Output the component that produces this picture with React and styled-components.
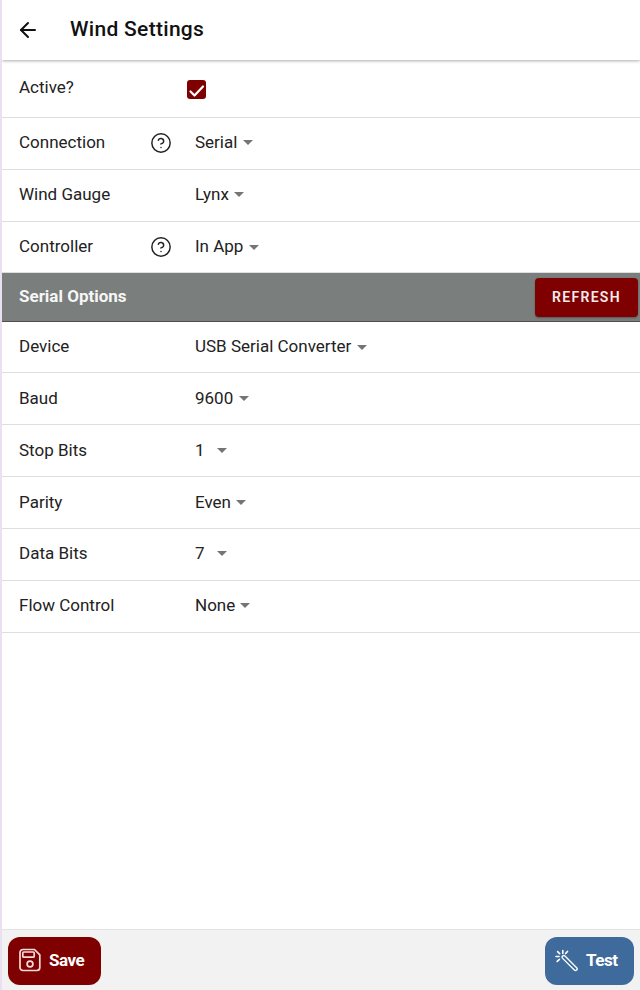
import React from 'react'
import styled, { createGlobalStyle } from 'styled-components'
import { ArrowLeft, CircleHelp } from 'lucide-react'

const GlobalStyle = createGlobalStyle`
  html, body { margin: 0; padding: 0; }
  body { font-family: Roboto, "Liberation Sans", sans-serif; background: #fff; }
  * { box-sizing: border-box; }
`

const Page = styled.div`
  display: flex;
  flex-direction: column;
  height: 990px;
  width: 640px;
  overflow: hidden;
  border-left: 2px solid #eae0f2;
  background: #fff;
`

const Header = styled.header`
  display: flex;
  align-items: center;
  flex: 0 0 60px;
  padding-left: 14px;
  gap: 30px;
  box-shadow: 0 1px 3px rgba(0, 0, 0, 0.32);
  position: relative;
  z-index: 1;
  color: #111;
`

const Title = styled.h1`
  margin: 0 0 2px;
  font-size: 21px;
  font-weight: 500;
  letter-spacing: 0.3px;
`

const Content = styled.main`
  flex: 1;
  padding-top: 1px;
`

const Row = styled.div`
  display: flex;
  align-items: center;
  height: ${({ $height }) => $height || 52}px;
  padding: 0 0 ${({ $lift }) => $lift || 0}px 17px;
  border-bottom: 1px solid #dedede;
  font-size: 17px;
  color: #222;
`

const Label = styled.div`
  width: 130px;
  position: relative;
  top: -1px;
`

const HelpSlot = styled.div`
  width: 46px;
  padding-left: 1px;
  display: flex;
  color: #222;
`

const Select = styled.div`
  display: flex;
  align-items: center;
  position: relative;
  top: -1px;
`

const Caret = styled.span`
  width: 0;
  height: 0;
  margin-left: ${({ $gap }) => $gap || 6}px;
  margin-top: 2px;
  border-left: 5px solid transparent;
  border-right: 5px solid transparent;
  border-top: 5px solid #757575;
`

const CheckBox = styled.div`
  display: flex;
  width: 19px;
  height: 19px;
  margin: 2px 0 0 38px;
  border-radius: 3px;
  background: #7f0000;
`

const Section = styled.div`
  display: flex;
  align-items: center;
  justify-content: space-between;
  height: 49px;
  padding: 0 2px 0 17px;
  background: #7a7e7c;
  border-bottom: 1px solid #4d504f;
  color: #f6f6f6;
  font-size: 17px;
  font-weight: 700;
`

const SectionTitle = styled.span`
  position: relative;
  top: -1px;
`

const RefreshButton = styled.button`
  width: 103px;
  height: 39px;
  border: 0;
  border-radius: 4px;
  background: #7f0000;
  color: #f4ecec;
  font-family: inherit;
  font-size: 14px;
  font-weight: 600;
  letter-spacing: 1.3px;
  box-shadow: 0 1px 2px rgba(0, 0, 0, 0.3);
`

const Footer = styled.footer`
  display: flex;
  justify-content: space-between;
  flex: 0 0 60px;
  padding: 7px 6px 5px 6px;
  background: #f2f2f3;
  border-top: 1px solid #e4e4e4;
`

const ActionButton = styled.button`
  display: flex;
  align-items: center;
  gap: ${({ $gap }) => $gap}px;
  height: 48px;
  width: ${({ $width }) => $width}px;
  padding: 0 0 2px ${({ $pad }) => $pad}px;
  border: 0;
  border-radius: 12px;
  background: ${({ $color }) => $color};
  color: #fff;
  font-family: inherit;
  font-size: 17px;
  font-weight: 700;
  letter-spacing: -0.5px;
`

const CheckMark = () => (
  <svg width="19" height="19" viewBox="0 0 19 19" fill="none" stroke="#fff" strokeWidth="2.2" strokeLinecap="round" strokeLinejoin="round">
    <path d="M3.5 11.5 L7.5 15.5 L16 6.5" />
  </svg>
)

const SaveIcon = () => (
  <svg width="22" height="24" viewBox="0 0 22 24" fill="none" stroke="#f6dcdc" strokeWidth="1.7" strokeLinejoin="round">
    <path d="M4 1.5 H15.5 L20.8 6.8 V19.5 A3 3 0 0 1 17.8 22.5 H4 A3 3 0 0 1 1 19.5 V4.5 A3 3 0 0 1 4 1.5 Z" />
    <rect x="3.8" y="4" width="11.4" height="5.2" rx="1" />
    <circle cx="11" cy="16" r="2.9" />
  </svg>
)

const WandIcon = () => (
  <svg width="24" height="24" viewBox="0 0 24 24" fill="none" stroke="#fff" strokeLinecap="round">
    <path d="M9.8 9.2 L21.5 20.9" strokeWidth="4.6" />
    <path d="M9.8 9.2 L21.5 20.9" strokeWidth="2" stroke="#3f6b9c" />
    <path d="M8.8 2.5 V5.5 M2 8.5 H5 M3.6 3.6 L5.6 5.6 M13.5 3.4 L11.6 5.6 M3.2 13.4 L5.4 11.4" strokeWidth="1.6" />
  </svg>
)

const connectionRows = [
  { label: 'Connection', value: 'Serial', help: true, lift: 2 },
  { label: 'Wind Gauge', value: 'Lynx', lift: 2, gap: 5 },
  { label: 'Controller', value: 'In App', help: true, height: 51 },
]

const serialRows = [
  { label: 'Device', value: 'USB Serial Converter', height: 51 },
  { label: 'Baud', value: '9600' },
  { label: 'Stop Bits', value: '1', gap: 12 },
  { label: 'Parity', value: 'Even', gap: 5 },
  { label: 'Data Bits', value: '7', gap: 12, lift: 2 },
  { label: 'Flow Control', value: 'None', gap: 5, lift: 2 },
]

const SettingRow = ({ label, value, help, gap, height, lift }) => (
  <Row $height={height} $lift={lift}>
    <Label>{label}</Label>
    <HelpSlot>{help && <CircleHelp size={22} strokeWidth={1.6} />}</HelpSlot>
    <Select>
      {value}
      <Caret $gap={gap} />
    </Select>
  </Row>
)

const App = () => (
  <Page>
    <GlobalStyle />
    <Header>
      <ArrowLeft size={24} strokeWidth={2} />
      <Title>Wind Settings</Title>
    </Header>
    <Content>
      <Row $height={57} $lift={2}>
        <Label>Active?</Label>
        <CheckBox><CheckMark /></CheckBox>
      </Row>
      {connectionRows.map((row) => <SettingRow key={row.label} {...row} />)}
      <Section>
        <SectionTitle>Serial Options</SectionTitle>
        <RefreshButton>REFRESH</RefreshButton>
      </Section>
      {serialRows.map((row) => <SettingRow key={row.label} {...row} />)}
    </Content>
    <Footer>
      <ActionButton $width={93} $pad={11} $gap={8} $color="#7f0000">
        <SaveIcon />
        Save
      </ActionButton>
      <ActionButton $width={89} $pad={9} $gap={8} $color="#3f6b9c">
        <WandIcon />
        Test
      </ActionButton>
    </Footer>
  </Page>
)

export default App
